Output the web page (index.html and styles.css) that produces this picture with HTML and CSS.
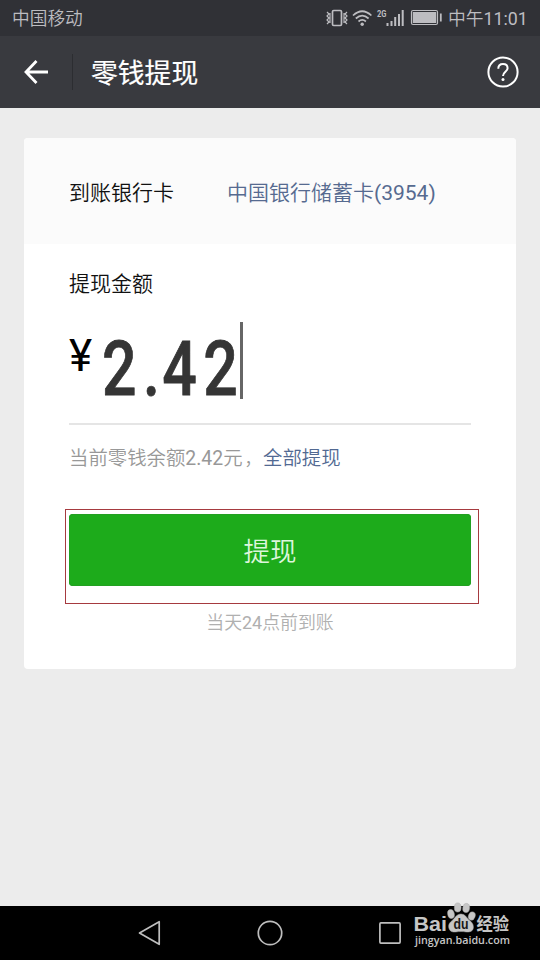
FILE: index.html
```html
<!DOCTYPE html>
<html lang="zh-CN">
<head>
<meta charset="utf-8">
<title>零钱提现</title>
<link rel="stylesheet" href="styles.css">
</head>
<body>
<div class="screen">
  <div class="status">
    <span class="carrier">中国移动</span>
    <svg class="status-icons" width="120" height="36" viewBox="324 0 120 36" fill="none" stroke="#bdbdc1">
      <rect x="332.500" y="10.500" width="9" height="15" rx="1.200" stroke-width="1.700"/>
      <path d="M327 12l2 2-2 2 2 2-2 2 2 2-2 2M330 13v10M347 12l-2 2 2 2-2 2 2 2-2 2 2 2M344 13v10" stroke-width="1.200"/>
      <path d="M353 15.500q9.200-8.500 18.400 0M355.800 18.500q6.400-5.800 12.800 0M358.500 21.500q3.700-3.200 7.400 0" stroke-width="1.700"/>
      <circle cx="362.200" cy="24.200" r="1.700" fill="#bdbdc1" stroke="none"/>
      <path d="M387.500 26v-3M391.500 26v-5M395.200 26v-9M399 26v-12M402.700 26v-16" stroke-width="2"/>
      <rect x="411.500" y="10.500" width="26" height="14" rx="1.500" stroke-width="1.200"/>
      <rect x="412.800" y="12" width="23.400" height="11" fill="#bdbdc1" stroke="none"/>
      <path d="M440.800 13.500v8" stroke-width="1.800"/>
      <text class="network" x="377" y="17" textLength="9.500" lengthAdjust="spacingAndGlyphs">2G</text>
    </svg>
    <span class="clock">中午<span class="num">11:01</span></span>
  </div>
  <div class="header">
    <svg class="back" width="26" height="26" viewBox="0 0 26 26" fill="none" stroke="#fff" stroke-width="2.800"><path d="M13.500 2L3 13l10.500 11M3 13h22"/></svg>
    <div class="divider"></div>
    <h1 class="title">零钱提现</h1>
    <svg class="help" width="34" height="34" viewBox="0 0 34 34" fill="none" stroke="#fff"><circle cx="17" cy="17" r="14.600" stroke-width="2"/><path d="M12.300 13.700c0-3 2-4.700 4.700-4.700s4.600 1.600 4.600 4.200c0 3.500-4.600 3.900-4.600 7.800" stroke-width="2"/><circle cx="17" cy="24.500" r="1.500" fill="#fff" stroke="none"/></svg>
  </div>
  <div class="content">
    <div class="card">
      <div class="bank">
        <span class="bank-label">到账银行卡</span>
        <span class="bank-name">中国银行储蓄卡<span class="num">(3954)</span></span>
      </div>
      <div class="form">
        <div class="amount-label">提现金额</div>
        <div class="amount"><span class="yen">¥</span><span class="value"><span class="digits">2<span class="point">.</span>42</span></span><span class="cursor"></span></div>
        <div class="balance"><span class="remaining">当前零钱余额<span class="num">2.42</span>元<span class="comma">，</span></span><a class="all">全部提现</a></div>
        <div class="highlight"><div class="button">提现</div></div>
        <div class="note">当天<span class="num">24</span>点前到账</div>
      </div>
    </div>
  </div>
  <div class="nav">
    <svg width="24" height="28" viewBox="0 0 24 28" fill="none" stroke="#bebebe" stroke-width="1.700" stroke-linejoin="round"><path d="M1.500 14L21.200 2.700v22.600z"/></svg>
    <svg width="28" height="28" viewBox="0 0 28 28" fill="none" stroke="#bebebe" stroke-width="1.700"><circle cx="14" cy="14" r="11.700"/></svg>
    <svg width="24" height="28" viewBox="0 0 24 28" fill="none" stroke="#bebebe" stroke-width="1.700"><rect x="1.900" y="3.900" width="20.200" height="20.200" rx="1"/></svg>
  </div>
  <div class="watermark">
    <svg width="110" height="60" viewBox="408 900 110 60" fill="#c6c6c6">
      <text class="mark-bai" x="413.500" y="931" textLength="33.500" lengthAdjust="spacingAndGlyphs">Bai</text>
      <g stroke="#aaa" stroke-width=".5">
      <ellipse cx="451" cy="914" rx="3.300" ry="4.500" transform="rotate(-12 451 914)"/>
      <ellipse cx="457.700" cy="907.500" rx="3.400" ry="4.600"/>
      <ellipse cx="466.200" cy="908" rx="3.400" ry="4.600" transform="rotate(8 466.200 908)"/>
      <ellipse cx="471.800" cy="916" rx="3.300" ry="4.200" transform="rotate(20 471.800 916)"/>
      <path d="M461 914c-4.500 0-6 4-8.500 6.200-2.500 2.200-4.200 3.800-3.800 6.800.5 4.400 3.800 5.400 7.300 4.900 3.200-.5 7-.5 10 0 4.200.6 7.400-1 7.400-5 0-3.200-2-5-4.500-7.200-2.400-2.200-3.800-5.700-7.900-5.700z"/>
      </g>
      <text class="mark-du" x="453.500" y="929" textLength="15" lengthAdjust="spacingAndGlyphs">du</text>
      <text class="mark-cn" x="476.500" y="930" textLength="32.500" lengthAdjust="spacingAndGlyphs">经验</text>
      <text class="mark-url" x="415" y="944" textLength="95" lengthAdjust="spacingAndGlyphs">jingyan.baidu.com</text>
    </svg>
  </div>
</div>
</body>
</html>
```
FILE: styles.css
```css
* { box-sizing: border-box; }
body { margin: 0; font-family: Roboto, "Noto Sans CJK SC", sans-serif; }
.screen { position: relative; width: 540px; height: 960px; display: flex; flex-direction: column; overflow: hidden; background: #ececec; white-space: nowrap; }
.num { font-weight: 400; }
.status { height: 36px; flex: none; display: flex; align-items: center; padding: 0 13px 0 12px; background: #303136; color: #bdbdc1; font-weight: 350; line-height: 36px; }
.carrier { padding-top: 2px; font-size: 17.700px; }
.status-icons { margin-left: auto; }
.network { font: 700 9px Roboto, sans-serif; fill: #bdbdc1; stroke: none; }
.clock { width: 79px; margin-left: 4px; padding-top: 2px; font-size: 17.800px; }
.header { height: 72px; flex: none; display: flex; align-items: center; padding: 0 20px 0 23px; background: #393a3f; color: #fff; }
.divider { width: 1px; height: 36px; margin-left: 23px; background: #2c2d31; }
.title { margin: 0 0 0 18px; padding-top: 4px; font-size: 26.800px; font-weight: 400; line-height: 72px; -webkit-text-stroke: .2px #fff; }
.help { margin-left: auto; }
.content { flex: 1; padding: 30px 24px; }
.card { height: 531px; border-radius: 4px; overflow: hidden; background: #fff; }
.bank { height: 106px; display: flex; align-items: center; padding: 3px 0 0 45px; background: #fbfbfb; font-size: 21px; line-height: 30px; }
.bank-label { width: 158px; color: #111; font-weight: 350; }
.bank-name { color: #566a90; font-weight: 350; }
.form { padding: 25px 45px 0; }
.amount-label { height: 30px; font-size: 21px; line-height: 30px; color: #111; font-weight: 350; }
.amount { height: 126px; display: flex; border-bottom: 2px solid #e5e5e5; }
.yen { width: 33px; padding-top: 32px; font-size: 44px; line-height: 50px; color: #000; }
.value { width: 138px; padding-top: 25px; font-size: 76px; font-weight: 500; line-height: 90px; color: #353535; }
.digits { display: inline-block; transform: scaleX(.8); transform-origin: 0 50%; letter-spacing: 8px; -webkit-text-stroke: .8px #353535; }
.point { letter-spacing: 3px; }
.cursor { width: 3px; height: 77px; margin-top: 23px; background: #666; }
.balance { display: flex; height: 30px; margin-top: 19px; font-size: 19.400px; line-height: 30px; color: #989898; font-weight: 350; }
.remaining { width: 194px; }
.comma { margin-left: 2px; font-size: 17px; }
.all { color: #526992; }
.highlight { width: 414px; height: 95px; margin: 35px 0 0 -4px; padding: 4px 7px 0 3px; border: 1px solid #a63a3f; }
.button { width: 402px; height: 72px; border-radius: 4px; background: #1dab1b; color: #dcf6dc; font-size: 26.500px; line-height: 76px; font-weight: 350; text-align: center; box-shadow: inset 0 0 0 1px #23a022; }
.note { margin-top: 4px; font-size: 17.900px; line-height: 30px; text-align: center; color: #b0b0b0; font-weight: 350; }
.nav { height: 54px; flex: none; display: flex; align-items: center; justify-content: space-between; padding: 0 138px; background: #000; }
.watermark { position: absolute; left: 408px; top: 900px; }
.mark-bai { font: 700 21px "Liberation Sans", sans-serif; }
.mark-du { font: 700 14px "Liberation Sans", sans-serif; fill: #181818; }
.mark-cn { font: 700 17px "Noto Sans CJK SC", sans-serif; }
.mark-url { font: 600 11.500px "Open Sans", sans-serif; }
```
